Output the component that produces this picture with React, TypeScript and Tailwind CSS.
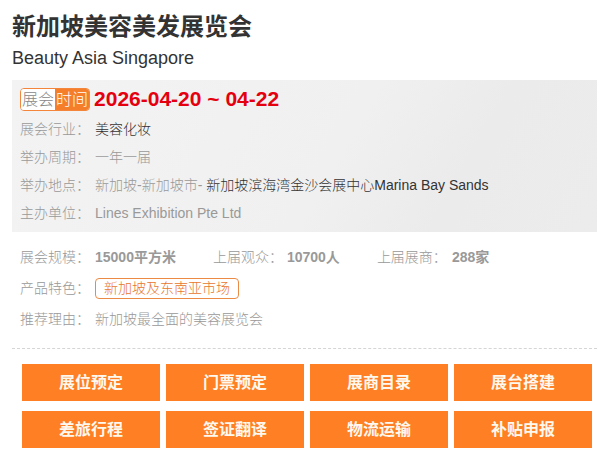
import React from "react";

const font = { fontFamily: '"Liberation Sans", "Noto Sans CJK SC", sans-serif' };

function Row({ label, children }: { label: string; children: React.ReactNode }) {
  return (
    <div className="flex h-[28px] items-center text-[14px] font-light">
      <span className="w-[75px] shrink-0 text-[#999]">{label}</span>
      <span>{children}</span>
    </div>
  );
}

const buttons = ["展位预定", "门票预定", "展商目录", "展台搭建", "差旅行程", "签证翻译", "物流运输", "补贴申报"];

export default function App() {
  return (
    <div className="w-[607px] h-[465px] bg-white pl-[12px] pr-[10px]" style={font}>
      <div className="pt-[12px] text-[24px] leading-[30px] font-bold text-[#333]">新加坡美容美发展览会</div>
      <div className="mt-[4px] text-[18px] leading-[24px] text-[#333]">Beauty Asia Singapore</div>

      <div className="mt-[10px] h-[152px] pt-[3px] pb-[5px] pl-[8px] bg-[linear-gradient(120deg,#f3f3f3_0%,#f0f0f0_55%,#ebebeb_75%,#ececec_100%)]">
        <div className="flex h-[32px] items-center">
          <div className="flex h-[23px] items-stretch overflow-hidden rounded-[4px] border border-[#f3863a] text-[16px] leading-[21px] font-light">
            <span className="bg-white px-[1px] text-[#888]">展会</span>
            <span className="bg-[#f57e2a] px-[1px] text-white">时间</span>
          </div>
          <span className="ml-[4px] text-[21px] font-bold text-[#e4000f]">2026-04-20 ~ 04-22</span>
        </div>
        <Row label="展会行业：">
          <span className="text-[#333]">美容化妆</span>
        </Row>
        <Row label="举办周期：">
          <span className="text-[#999]">一年一届</span>
        </Row>
        <Row label="举办地点：">
          <span className="text-[#999]">新加坡-新加坡市- </span>
          <span className="text-[#333]">新加坡滨海湾金沙会展中心Marina Bay Sands</span>
        </Row>
        <Row label="主办单位：">
          <span className="text-[#999]">Lines Exhibition Pte Ltd</span>
        </Row>
      </div>

      <div className="pt-[10px] pl-[8px] text-[14px]">
        <div className="flex h-[31px] items-center gap-[37px]">
          <div className="flex">
            <span className="w-[75px] font-light text-[#999]">展会规模：</span>
            <span className="font-bold text-[#999]">15000平方米</span>
          </div>
          <div className="flex">
            <span className="w-[74px] font-light text-[#999]">上届观众：</span>
            <span className="font-bold text-[#999]">10700人</span>
          </div>
          <div className="flex">
            <span className="w-[75px] font-light text-[#999]">上届展商：</span>
            <span className="font-bold text-[#999]">288家</span>
          </div>
        </div>
        <div className="flex h-[31px] items-center font-light">
          <span className="w-[75px] text-[#999]">产品特色：</span>
          <span className="flex h-[21px] items-center rounded-[4px] border border-[#eb8a45] px-[8px] text-[#e8772e]">新加坡及东南亚市场</span>
        </div>
        <div className="flex h-[31px] items-center font-light">
          <span className="w-[75px] text-[#999]">推荐理由：</span>
          <span className="text-[#999]">新加坡最全面的美容展览会</span>
        </div>
      </div>

      <div className="mt-[13px] border-t border-dashed border-[#d5d5d5]" />

      <div className="mt-[15px] ml-[10px] grid grid-cols-[repeat(4,138px)] gap-x-[6px] gap-y-[10px]">
        {buttons.map((b) => (
          <div key={b} className="flex h-[37px] items-center justify-center bg-[#fe7f24] text-[16px] font-bold text-[#fff8ee]">
            {b}
          </div>
        ))}
      </div>
    </div>
  );
}
